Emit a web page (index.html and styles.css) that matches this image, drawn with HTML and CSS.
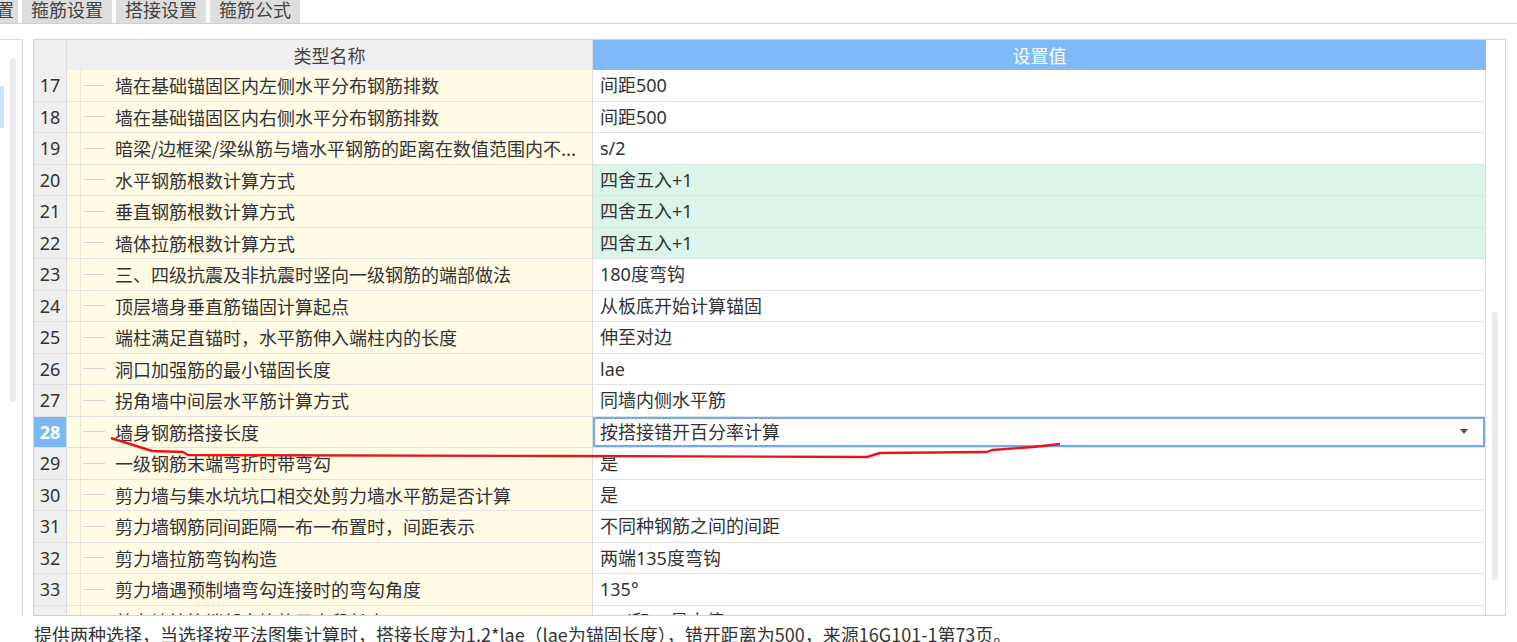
FILE: index.html
```html
<!DOCTYPE html>
<html lang="zh">
<head>
<meta charset="utf-8">
<title>设置</title>
<link rel="stylesheet" href="styles.css">
</head>
<body>
<div class="page">
  <div class="tabs">
    <div class="tab tab-cut">置</div>
    <div class="tab">箍筋设置</div>
    <div class="tab">搭接设置</div>
    <div class="tab">箍筋公式</div>
  </div>
  <div class="main">
    <div class="side">
      <div class="side-sel"></div>
      <div class="side-scroll"></div>
    </div>
    <div class="grid">
      <div class="grid-body">
        <div class="hdr">
          <div class="h-num"></div>
          <div class="h-name">类型名称</div>
          <div class="h-val">设置值</div>
        </div>
        <div class="rows">
          <div class="row"><div class="num">17</div><div class="name"><span class="tree"></span><span class="branch"></span><span class="txt">墙在基础锚固区内左侧水平分布钢筋排数</span></div><div class="val">间距500</div></div>
          <div class="row"><div class="num">18</div><div class="name"><span class="tree"></span><span class="branch"></span><span class="txt">墙在基础锚固区内右侧水平分布钢筋排数</span></div><div class="val">间距500</div></div>
          <div class="row"><div class="num">19</div><div class="name"><span class="tree"></span><span class="branch"></span><span class="txt">暗梁/边框梁/梁纵筋与墙水平钢筋的距离在数值范围内不...</span></div><div class="val">s/2</div></div>
          <div class="row"><div class="num">20</div><div class="name"><span class="tree"></span><span class="branch"></span><span class="txt">水平钢筋根数计算方式</span></div><div class="val val-green">四舍五入+1</div></div>
          <div class="row"><div class="num">21</div><div class="name"><span class="tree"></span><span class="branch"></span><span class="txt">垂直钢筋根数计算方式</span></div><div class="val val-green">四舍五入+1</div></div>
          <div class="row"><div class="num">22</div><div class="name"><span class="tree"></span><span class="branch"></span><span class="txt">墙体拉筋根数计算方式</span></div><div class="val val-green">四舍五入+1</div></div>
          <div class="row"><div class="num">23</div><div class="name"><span class="tree"></span><span class="branch"></span><span class="txt">三、四级抗震及非抗震时竖向一级钢筋的端部做法</span></div><div class="val">180度弯钩</div></div>
          <div class="row"><div class="num">24</div><div class="name"><span class="tree"></span><span class="branch"></span><span class="txt">顶层墙身垂直筋锚固计算起点</span></div><div class="val">从板底开始计算锚固</div></div>
          <div class="row"><div class="num">25</div><div class="name"><span class="tree"></span><span class="branch"></span><span class="txt">端柱满足直锚时，水平筋伸入端柱内的长度</span></div><div class="val">伸至对边</div></div>
          <div class="row"><div class="num">26</div><div class="name"><span class="tree"></span><span class="branch"></span><span class="txt">洞口加强筋的最小锚固长度</span></div><div class="val">lae</div></div>
          <div class="row"><div class="num">27</div><div class="name"><span class="tree"></span><span class="branch"></span><span class="txt">拐角墙中间层水平筋计算方式</span></div><div class="val">同墙内侧水平筋</div></div>
          <div class="row row-sel"><div class="num">28</div><div class="name"><span class="tree"></span><span class="branch"></span><span class="txt">墙身钢筋搭接长度</span></div><div class="val val-edit"><span>按搭接错开百分率计算</span><svg class="arrow" width="8" height="5" viewBox="0 0 8 5"><path d="M0 0H8L4 5Z" fill="#555"/></svg></div></div>
          <div class="row"><div class="num">29</div><div class="name"><span class="tree"></span><span class="branch"></span><span class="txt">一级钢筋末端弯折时带弯勾</span></div><div class="val">是</div></div>
          <div class="row"><div class="num">30</div><div class="name"><span class="tree"></span><span class="branch"></span><span class="txt">剪力墙与集水坑坑口相交处剪力墙水平筋是否计算</span></div><div class="val">是</div></div>
          <div class="row"><div class="num">31</div><div class="name"><span class="tree"></span><span class="branch"></span><span class="txt">剪力墙钢筋同间距隔一布一布置时，间距表示</span></div><div class="val">不同种钢筋之间的间距</div></div>
          <div class="row"><div class="num">32</div><div class="name"><span class="tree"></span><span class="branch"></span><span class="txt">剪力墙拉筋弯钩构造</span></div><div class="val">两端135度弯钩</div></div>
          <div class="row"><div class="num">33</div><div class="name"><span class="tree"></span><span class="branch"></span><span class="txt">剪力墙遇预制墙弯勾连接时的弯勾角度</span></div><div class="val">135°</div></div>
          <div class="row"><div class="num">34</div><div class="name"><span class="tree"></span><span class="branch"></span><span class="txt">剪力墙拉筋端部弯钩的平直段长度</span></div><div class="val">10d和75最大值</div></div>
        </div>
      </div>
      <div class="vscroll"><div class="thumb"></div></div>
    </div>
  </div>
  <div class="desc">提供两种选择，当选择按平法图集计算时，搭接长度为1.2*lae（lae为锚固长度），错开距离为500，来源16G101-1第73页。</div>
  <svg class="annot" width="1517" height="642" viewBox="0 0 1517 642">
    <path d="M111 438 L130 444 L152 451 L183 452 L188 455 L560 456 L867 457 L880 453 L987 452 L992 450 L1033 447 L1060 444" fill="none" stroke="#e5161b" stroke-width="2.4" stroke-linejoin="round"/>
  </svg>
</div>
</body>
</html>
```
FILE: styles.css
```css
html, body {
  margin: 0;
  padding: 0;
  background: #ffffff;
}
body {
  font-family: "Noto Sans", "Noto Sans CJK SC", sans-serif;
  font-size: 17px;
  color: #333333;
  overflow: hidden;
}
.page {
  position: relative;
  width: 1517px;
  height: 642px;
  overflow: hidden;
}
.tabs {
  display: flex;
  gap: 4px;
  height: 23px;
  border-bottom: 1px solid #d0d0d0;
}
.tab {
  background: #dedede;
  color: #444444;
  height: 23px;
  line-height: 19px;
  padding: 0 9px;
  font-family: "Noto Sans CJK SC", sans-serif;
  font-size: 18px;
  white-space: nowrap;
}
.tab-cut {
  margin-left: -4px;
  padding: 0 4px 0 0;
}
.main {
  display: flex;
  margin-top: 15px;
  height: 577px;
}
.side {
  position: relative;
  width: 22px;
  border-top: 1px solid #d8d8d8;
  border-right: 1px solid #d8d8d8;
  margin-right: 10px;
}
.side-sel {
  position: absolute;
  left: 0;
  top: 46px;
  width: 4px;
  height: 42px;
  background: #cfe3f8;
}
.side-scroll {
  position: absolute;
  left: 10px;
  top: 18px;
  width: 6px;
  height: 344px;
  border-radius: 3px;
  background: #ececec;
}
.grid {
  display: flex;
  width: 1471px;
  height: 575px;
  border: 1px solid #d2d2d2;
}
.grid-body {
  width: 1452px;
  display: flex;
  flex-direction: column;
}
.hdr {
  display: grid;
  grid-template-columns: 33px 526px 1fr;
  height: 30px;
  line-height: 30px;
  font-family: "Noto Sans CJK SC", sans-serif;
  font-size: 18px;
}
.h-num {
  background: #efefef;
  border-right: 1px solid #dcdcdc;
  border-bottom: 1px solid #dcdcdc;
}
.h-name {
  background: #efefef;
  border-right: 1px solid #dcdcdc;
  border-bottom: 1px solid #dcdcdc;
  text-align: center;
  color: #444444;
}
.h-val {
  background: #7fbaf6;
  color: #ffffff;
  text-align: center;
}
.rows {
  flex: 1;
  overflow: hidden;
  border-right: 1px solid #dedede;
}
.row {
  display: grid;
  grid-template-columns: 33px 526px 1fr;
  height: 31.5px;
}
.row > div {
  border-bottom: 1px solid #e2e2e2;
  box-sizing: border-box;
}
.num {
  background: #efefef;
  border-right: 1px solid #dcdcdc;
  text-align: center;
  line-height: 30px;
  font-size: 18px;
  color: #333333;
}
.row-sel .num {
  background: #7db8f6;
  color: #ffffff;
  font-weight: bold;
}
.name {
  display: flex;
  align-items: center;
  background: #fffbe5;
  border-right: 1px solid #dcdcdc;
  overflow: hidden;
  white-space: nowrap;
}
.tree {
  align-self: stretch;
  width: 13px;
  border-right: 1px solid #eceadb;
  flex: none;
}
.branch {
  width: 22px;
  height: 1px;
  margin-left: 2px;
  background: #d6d6d6;
  flex: none;
}
.txt {
  margin-left: 10px;
  font-family: "Noto Sans CJK SC", sans-serif;
  font-size: 18px;
  line-height: 30px;
}
.val {
  display: flex;
  align-items: center;
  padding-left: 7px;
  font-family: "Noto Sans", "Noto Sans CJK SC", sans-serif;
  font-size: 18px;
  line-height: 30px;
  white-space: nowrap;
  background: #ffffff;
}
.val-green {
  background: #dcf5e9;
}
.val-edit {
  justify-content: space-between;
  padding-right: 17px;
  box-shadow: inset 0 0 0 2px #72aaea;
}
.arrow {
  display: block;
}
.vscroll {
  position: relative;
  width: 19px;
  background: #ffffff;
}
.thumb {
  position: absolute;
  left: 6px;
  top: 272px;
  width: 6px;
  height: 268px;
  border-radius: 3px;
  background: #ebebeb;
}
.desc {
  padding-left: 34px;
  margin-top: 6px;
  line-height: 24px;
  font-family: "Noto Sans CJK SC", sans-serif;
  font-size: 18px;
  color: #333333;
  white-space: nowrap;
}
.annot {
  position: absolute;
  left: 0;
  top: 0;
  pointer-events: none;
}
```
